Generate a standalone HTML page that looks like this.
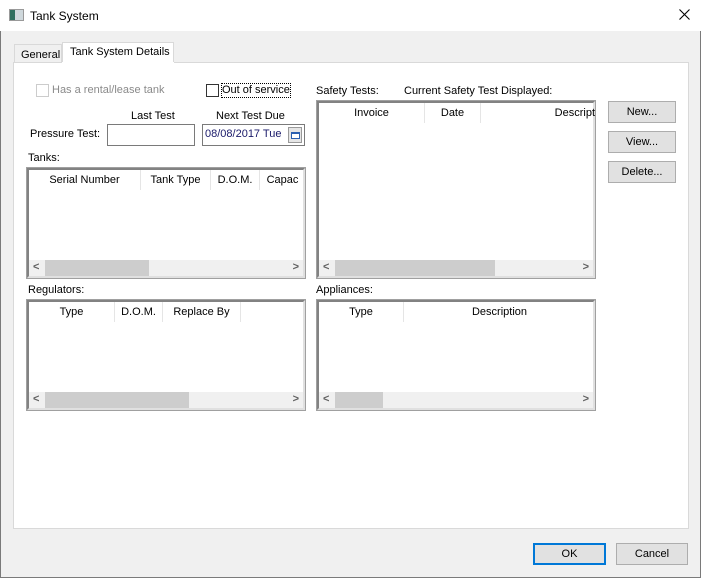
<!DOCTYPE html><html><head><style>
*{margin:0;padding:0;box-sizing:border-box}
body{width:701px;height:578px;background:#f0f0f0;font:11px "Liberation Sans",sans-serif;color:#000;position:relative;overflow:hidden}
.a{position:absolute;white-space:nowrap}
.win{position:absolute;left:0;top:0;width:701px;height:578px;border:1px solid #7a7a7a;border-top:none}
.list{position:absolute;background:#fff;border:2px solid #828282;border-right-color:#e0e0e0;border-bottom-color:#e0e0e0;box-shadow:0 0 0 1px #a0a0a0}
.hd{position:absolute;top:0;height:20px;line-height:20px;text-align:center;border-right:1px solid #e5e5e5;overflow:hidden}
.sb{position:absolute;left:0;right:0;bottom:0;height:16px;background:#f0f0f0}
.th{position:absolute;top:0;height:16px;background:#cdcdcd}
.ar{position:absolute;top:1px;font-size:11px;font-weight:bold;color:#606060}
.btn{position:absolute;background:#e1e1e1;border:1px solid #adadad;text-align:center;line-height:20px}
</style></head><body>
<div class="win"></div>
<div class="a" style="left:0;top:0;width:701px;height:31px;background:#fff"></div>
<div class="a" style="left:9px;top:9px;width:15px;height:12px;border:1px solid #999;background:linear-gradient(90deg,#2f6f5f 0 5px,#cfd8dc 5px)"></div>
<div class="a" style="left:30px;top:9px;font-size:12px">Tank System</div>
<svg class="a" style="left:679px;top:9px" width="11" height="11"><path d="M0.5 0.5L10.5 10.5M10.5 0.5L0.5 10.5" stroke="#000" stroke-width="1.1"/></svg>
<div class="a" style="left:14px;top:44px;width:48px;height:19px;border:1px solid #d9d9d9;border-bottom:none;background:#f0f0f0;padding:4px 0 0 6px">General</div>
<div class="a" style="left:62px;top:42px;width:112px;height:21px;border:1px solid #d9d9d9;border-bottom:none;background:#fff;padding:3px 0 0 7px">Tank System Details</div>
<div class="a" style="left:13px;top:62px;width:676px;height:467px;border:1px solid #d9d9d9;border-top:none;background:#fff"></div>
<div class="a" style="left:174px;top:62px;width:515px;height:1px;background:#d9d9d9"></div>
<div class="a" style="left:13px;top:62px;width:49px;height:1px;background:#d9d9d9"></div>
<div class="a" style="left:36px;top:84px;width:13px;height:13px;border:1px solid #ccc"></div>
<div class="a" style="left:52px;top:84px;color:#8a8a8a">Has a rental/lease tank</div>
<div class="a" style="left:206px;top:84px;width:13px;height:13px;border:1px solid #333"></div>
<div class="a" style="left:222px;top:84px;outline:1px dotted #000;line-height:13px;width:68px">Out of service</div>
<div class="a" style="left:131px;top:110px">Last Test</div>
<div class="a" style="left:216px;top:110px">Next Test Due</div>
<div class="a" style="left:30px;top:128px">Pressure Test:</div>
<div class="a" style="left:107px;top:124px;width:88px;height:22px;border:1px solid #7a7a7a;background:#fff"></div>
<div class="a" style="left:202px;top:124px;width:103px;height:22px;border:1px solid #7a7a7a;background:#fff;padding:3px 0 0 2px;color:#1a1a6a">08/08/2017 Tue</div>
<div class="a" style="left:288px;top:127px;width:14px;height:16px;border:1px solid #999;background:#e5e5e5"><div style="margin:4px 0 0 2px;width:9px;height:7px;border:1px solid #2a5fb0;border-top-width:2px;background:#fff"></div></div>
<div class="a" style="left:28px;top:152px">Tanks:</div>
<div class="list" style="left:27px;top:168px;width:278px;height:110px">
<div class="hd" style="left:0;width:112px">Serial Number</div>
<div class="hd" style="left:112px;width:70px">Tank Type</div>
<div class="hd" style="left:182px;width:49px">D.O.M.</div>
<div class="hd" style="left:231px;width:45px;border:none">Capac</div>
<div class="sb"><span class="ar" style="left:4px">&lt;</span><div class="th" style="left:16px;width:104px"></div><span class="ar" style="right:4px">&gt;</span></div></div>
<div class="a" style="left:316px;top:85px">Safety Tests:</div>
<div class="a" style="left:404px;top:85px">Current Safety Test Displayed:</div>
<div class="list" style="left:317px;top:101px;width:278px;height:177px">
<div class="hd" style="left:0;width:106px">Invoice</div>
<div class="hd" style="left:106px;width:56px">Date</div>
<div class="hd" style="left:162px;width:114px;text-align:right;border:none">Descript</div>
<div class="sb"><span class="ar" style="left:4px">&lt;</span><div class="th" style="left:16px;width:160px"></div><span class="ar" style="right:4px">&gt;</span></div></div>
<div class="btn" style="left:608px;top:101px;width:68px;height:22px">New...</div>
<div class="btn" style="left:608px;top:131px;width:68px;height:22px">View...</div>
<div class="btn" style="left:608px;top:161px;width:68px;height:22px">Delete...</div>
<div class="a" style="left:28px;top:284px">Regulators:</div>
<div class="list" style="left:27px;top:300px;width:278px;height:110px">
<div class="hd" style="left:0;width:86px">Type</div>
<div class="hd" style="left:86px;width:48px">D.O.M.</div>
<div class="hd" style="left:134px;width:78px">Replace By</div>
<div class="sb"><span class="ar" style="left:4px">&lt;</span><div class="th" style="left:16px;width:144px"></div><span class="ar" style="right:4px">&gt;</span></div></div>
<div class="a" style="left:316px;top:284px">Appliances:</div>
<div class="list" style="left:317px;top:300px;width:278px;height:110px">
<div class="hd" style="left:0;width:85px">Type</div>
<div class="hd" style="left:85px;width:191px;border:none">Description</div>
<div class="sb"><span class="ar" style="left:4px">&lt;</span><div class="th" style="left:16px;width:48px"></div><span class="ar" style="right:4px">&gt;</span></div></div>
<div class="btn" style="left:533px;top:543px;width:73px;height:22px;border:2px solid #0078d7;line-height:18px">OK</div>
<div class="btn" style="left:616px;top:543px;width:72px;height:22px">Cancel</div>
</body></html>
